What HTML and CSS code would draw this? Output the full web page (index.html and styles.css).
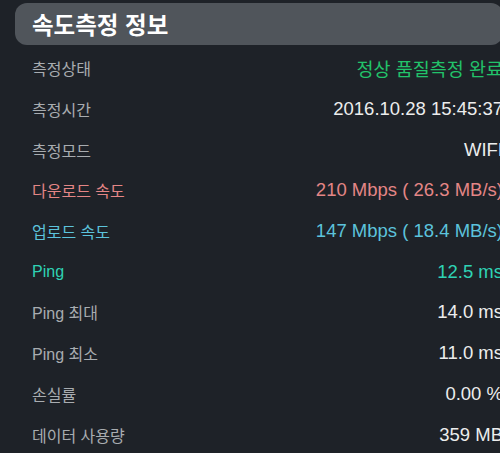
FILE: index.html
```html
<!DOCTYPE html>
<html lang="ko">
<head>
<meta charset="utf-8">
<link rel="stylesheet" href="styles.css">
</head>
<body>
<div class="page">
  <div class="header">속도측정 정보</div>
  <div class="list">
    <div class="row"><span class="label">측정상태</span><span class="value green">정상 품질측정 완료</span></div>
    <div class="row"><span class="label">측정시간</span><span class="value">2016.10.28 15:45:37</span></div>
    <div class="row"><span class="label">측정모드</span><span class="value">WIFI</span></div>
    <div class="row red"><span class="label">다운로드 속도</span><span class="value">210 Mbps ( 26.3 MB/s)</span></div>
    <div class="row blue"><span class="label">업로드 속도</span><span class="value">147 Mbps ( 18.4 MB/s)</span></div>
    <div class="row teal"><span class="label">Ping</span><span class="value">12.5 ms</span></div>
    <div class="row"><span class="label">Ping 최대</span><span class="value">14.0 ms</span></div>
    <div class="row"><span class="label">Ping 최소</span><span class="value">11.0 ms</span></div>
    <div class="row"><span class="label">손실률</span><span class="value">0.00 %</span></div>
    <div class="row"><span class="label">데이터 사용량</span><span class="value">359 MB</span></div>
  </div>
</div>
</body>
</html>
```
FILE: styles.css
```css
html, body {
  margin: 0;
  padding: 0;
  background: #1e2228;
  overflow: hidden;
}
body {
  width: 500px;
  height: 453px;
  font-family: "Liberation Sans", "Noto Sans CJK KR", sans-serif;
}
.page {
  padding-top: 3px;
  margin-right: -3px;
}
.header {
  margin-left: 15px;
  height: 42px;
  border-radius: 12px;
  background: #50555b;
  color: #ffffff;
  font-family: "Noto Sans CJK KR", sans-serif;
  font-size: 23.5px;
  font-weight: 700;
  line-height: 42px;
  padding-left: 17px;
}
.list {
  padding-top: 3px;
  padding-left: 32px;
}
.row {
  height: 40.7px;
  display: flex;
  justify-content: space-between;
  align-items: center;
}
.label {
  color: #a8acb0;
  font-size: 16px;
}
.value {
  color: #eceded;
  font-size: 18.5px;
}
.value.green {
  color: #22c36a;
}
.red .label, .red .value {
  color: #e48686;
}
.blue .label, .blue .value {
  color: #5cc3dc;
}
.teal .label, .teal .value {
  color: #2fd3b5;
}
```
